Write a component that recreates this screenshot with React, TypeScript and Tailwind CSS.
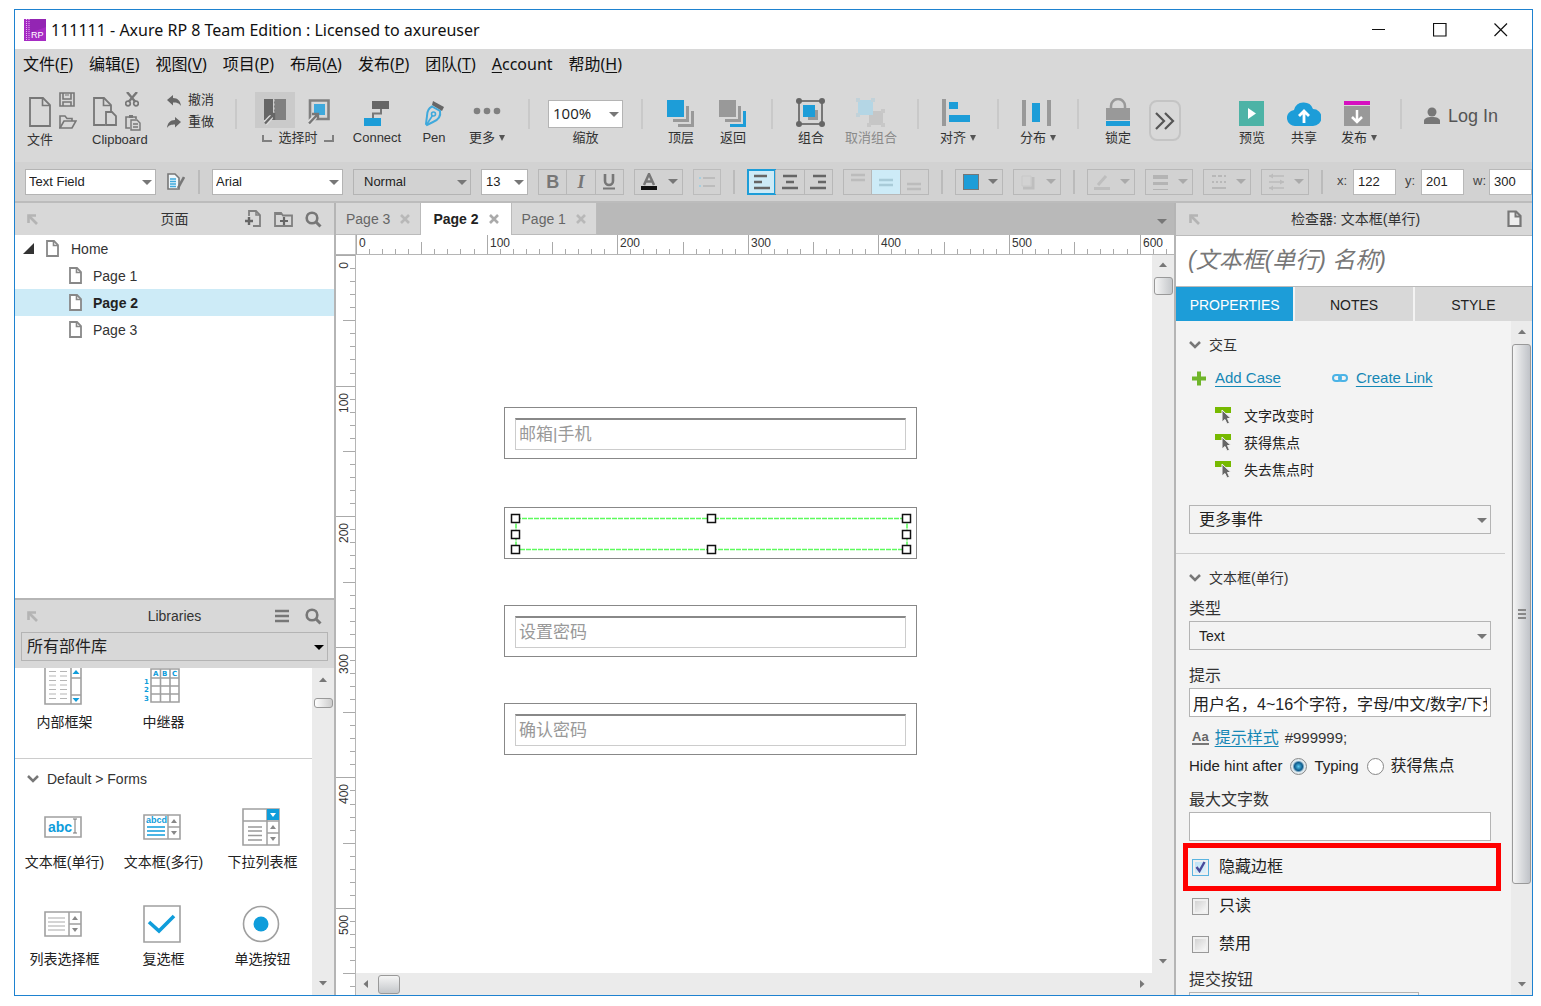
import { useState, type ReactNode } from 'react';
import { clsx } from 'clsx';

const MENUS: [string, string, string][] = [
  ['文件(', 'F', ')'], ['编辑(', 'E', ')'], ['视图(', 'V', ')'], ['项目(', 'P', ')'], ['布局(', 'A', ')'],
  ['发布(', 'P', ')'], ['团队(', 'T', ')'], ['', 'A', 'ccount'], ['帮助(', 'H', ')'],
];

const RULER_STEP = 13.06;

/* ---------- shared bits ---------- */

function Svg({ w, h, className, children }: { w: number; h: number; className?: string; children: ReactNode }) {
  return (
    <svg width={w} height={h} viewBox={`0 0 ${w} ${h}`} fill="none" aria-hidden="true" className={clsx('block shrink-0', className)}>
      {children}
    </svg>
  );
}

function Caret({ className }: { className?: string }) {
  return (
    <Svg w={10} h={5} className={className}>
      <path d="M0 0H10L5 5Z" fill="currentColor" />
    </Svg>
  );
}

function SelectBox({ label, value, className, caret = 'text-[#777]' }: { label: string; value: string; className?: string; caret?: string }) {
  return (
    <div className="relative flex shrink-0">
      <select aria-label={label} defaultValue={value} className={clsx('appearance-none border border-[#b4b4b4] pr-5 text-[#222] outline-none', className)}>
        <option>{value}</option>
      </select>
      <Caret className={clsx('pointer-events-none absolute top-1/2 right-1 -mt-0.5', caret)} />
    </div>
  );
}

function ToolSeparator() {
  return <div className="mx-[18px] h-[30px] w-0.5 shrink-0 self-center bg-[#c9c9c9]" />;
}

function FormatSeparator() {
  return <div className="mx-0.5 h-6 w-0.5 shrink-0 bg-[#bbb]" />;
}

function Tool({ label, menu, disabled, className, children }: { label: string; menu?: boolean; disabled?: boolean; className: string; children: ReactNode }) {
  return (
    <button disabled={disabled} className={clsx('flex shrink-0 flex-col items-center', className)}>
      <span className="flex h-[30px] items-end justify-center">{children}</span>
      <span className={clsx('flex items-center gap-1 leading-5 whitespace-nowrap', disabled ? 'text-[#8a8a8a]' : 'text-[#333]')}>
        {label}
        {menu && <Svg w={6} h={6}><path d="M0 0H6L3 6Z" fill="#555" /></Svg>}
      </span>
    </button>
  );
}

function DockIcon() {
  return (
    <Svg w={11} h={11}>
      <path d="M1.5 9V1.5H9" stroke="#b4b4b4" strokeWidth="2.6" />
      <path d="M1.5 1.5L10 10" stroke="#b4b4b4" strokeWidth="2.6" />
    </Svg>
  );
}

function SearchIcon() {
  return (
    <Svg w={17} h={17}>
      <circle cx="7" cy="7" r="5.3" stroke="#777" strokeWidth="2.6" />
      <path d="M11 11L15.5 15.5" stroke="#777" strokeWidth="3" />
    </Svg>
  );
}

function PageIcon({ className }: { className?: string }) {
  return (
    <Svg w={13} h={17} className={className}>
      <path d="M1 1H8L12 5V16H1Z" fill="#fff" stroke="#888" strokeWidth="1.8" />
      <path d="M7.5 1V5.5H12" stroke="#888" strokeWidth="1.6" />
    </Svg>
  );
}

function Chevron() {
  return <Svg w={12} h={8}><path d="M1 1L6 6L11 1" stroke="#777" strokeWidth="2.5" /></Svg>;
}

function ScrollArrow({ dir }: { dir: 'up' | 'down' | 'left' | 'right' }) {
  return (
    <Svg w={8} h={8} className={clsx(dir === 'down' && 'rotate-180', dir === 'left' && '-rotate-90', dir === 'right' && 'rotate-90')}>
      <path d="M0 6L4 1.5L8 6Z" fill="#777" />
    </Svg>
  );
}

/* ---------- title, menu and toolbars ---------- */

function TitleBar() {
  return (
    <header className="flex h-[39px] shrink-0 items-center bg-white pr-px pl-[9px] font-['Noto_Sans','Noto_Sans_CJK_SC',sans-serif]">
      <Svg w={22} h={22}>
        <path d="M0 0H22V22H0Z" fill="#a62bc4" />
        <path d="M6 0H22V8L6 14Z" fill="#9325b3" />
        <path d="M2.5 0V22M5 0V22" stroke="#e6b6f0" strokeDasharray="1 1" />
        <text x="7" y="19" fontSize="9" fill="#fff" fontFamily="Liberation Sans, sans-serif">RP</text>
      </Svg>
      <h1 className="ml-[5px] truncate text-base text-[#111]">111111 - Axure RP 8 Team Edition : Licensed to axureuser</h1>
      <div className="ml-auto flex self-stretch">
        <button aria-label="最小化" className="flex w-[61px] items-center justify-center"><Svg w={14} h={14}><path d="M0 6.5H13" stroke="#111" /></Svg></button>
        <button aria-label="最大化" className="flex w-[61px] items-center justify-center"><Svg w={14} h={14}><path d="M.5 .5H13V13H.5Z" stroke="#111" strokeWidth="1.2" /></Svg></button>
        <button aria-label="关闭" className="flex w-[61px] items-center justify-center"><Svg w={14} h={14}><path d="M.5 .5L13 13M13 .5L.5 13" stroke="#111" strokeWidth="1.2" /></Svg></button>
      </div>
    </header>
  );
}

function MenuBar() {
  return (
    <nav className="flex h-[30px] shrink-0 items-center gap-4 pl-2 font-['Noto_Sans','Noto_Sans_CJK_SC',sans-serif] text-base text-[#111]">
      {MENUS.map(([before, key, after]) => (
        <button key={before + key} className="whitespace-nowrap">{before}<span className="underline underline-offset-2">{key}</span>{after}</button>
      ))}
    </nav>
  );
}

function StackIcon({ front, back }: { front: string; back: string }) {
  return (
    <Svg w={28} h={28}>
      <path d="M0 0H17V17H0Z" fill={front} />
      <path d="M19 6H22V22H6V19H19Z" fill="#999" />
      <path d="M24 11H27V27H11V24H24Z" fill={back} />
    </Svg>
  );
}

function Toolbar() {
  return (
    <div className="flex h-[83px] shrink-0 items-end overflow-hidden pb-3.5 pl-3 text-[13px] text-[#333]">
      <button className="flex w-[52px] shrink-0 flex-col items-start">
        <span className="flex h-10 items-start gap-2 pl-0.5">
          <Svg w={22} h={30} className="mt-[5px]">
            <path d="M1 1H14L21 8V29H1Z" stroke="#777" strokeWidth="1.8" />
            <path d="M13.5 1V8.5H21" stroke="#777" strokeWidth="1.6" />
          </Svg>
          <span className="flex flex-col gap-2">
            <Svg w={17} h={15}>
              <path d="M1 1H15V14H1Z M4 1V7H12V1 M4 14V10H12V14" stroke="#777" strokeWidth="1.6" />
              <path d="M6 3H10" stroke="#777" />
            </Svg>
            <Svg w={18} h={14}>
              <path d="M1 13V1H6L8 3.5H13V6" stroke="#777" strokeWidth="1.6" />
              <path d="M1 13L5 6H17L13 13Z" stroke="#777" strokeWidth="1.6" />
            </Svg>
          </span>
        </span>
        <span className="leading-4">文件</span>
      </button>
      <button className="ml-[13px] flex w-[58px] shrink-0 flex-col items-start">
        <span className="flex h-10 items-start gap-2 pl-px">
          <Svg w={24} h={30} className="mt-[5px]">
            <path d="M12 28H1V1H11L18 8V14" stroke="#777" strokeWidth="1.8" />
            <path d="M10.5 1V8.5H18" stroke="#777" strokeWidth="1.6" />
            <path d="M13 15H19L23 19V28H13Z" stroke="#777" strokeWidth="1.8" />
          </Svg>
          <span className="flex flex-col gap-2">
            <Svg w={14} h={15}>
              <path d="M2 0L10.5 10M12 0L3.5 10" stroke="#777" strokeWidth="2.4" />
              <circle cx="3" cy="11.5" r="2.3" stroke="#777" strokeWidth="1.7" />
              <circle cx="11" cy="11.5" r="2.3" stroke="#777" strokeWidth="1.7" />
            </Svg>
            <Svg w={16} h={16}>
              <path d="M5 13H1V2H11V4" stroke="#777" strokeWidth="1.6" />
              <path d="M4 0H8V3H4Z" fill="#777" />
              <path d="M6 5H12L15 8V15H6Z M8 9H13M8 12H13" stroke="#777" strokeWidth="1.4" />
            </Svg>
          </span>
        </span>
        <span className="leading-4">Clipboard</span>
      </button>
      <div className="ml-[17px] flex w-[50px] shrink-0 flex-col gap-0.5 pb-4">
        <button className="flex items-center gap-[7px] leading-5">
          <Svg w={14} h={11}><path d="M6 0V3C11 3 13.5 6 14 11C12 8 10 7.5 6 7.5V10.5L0 5Z" fill="#666" /></Svg>撤消
        </button>
        <button className="flex items-center gap-[7px] leading-5">
          <Svg w={14} h={11}><path d="M8 0V3C3 3 .5 6 0 11C2 8 4 7.5 8 7.5V10.5L14 5Z" fill="#666" /></Svg>重做
        </button>
      </div>
      <ToolSeparator />
      <div className="flex w-[79px] shrink-0 flex-col">
        <div className="flex">
          <button aria-label="相交选择" className="flex h-9 w-10 items-center justify-center bg-[#cacaca]">
            <Svg w={22} h={26} className="mt-1">
              <path d="M0 0H9V21H0Z" fill="#666" />
              <path d="M10 0H22V21H10Z" fill="#808080" />
              <path d="M10 .5V21" stroke="#d8d8d8" strokeDasharray="2 2" />
              <path d="M1 24.5L9 16" stroke="#ddd" strokeWidth="5" />
              <path d="M1 24.5L9 16M4 15H10V21" stroke="#666" strokeWidth="2.4" />
            </Svg>
          </button>
          <button aria-label="包含选择" className="flex h-9 w-[39px] items-center justify-center pl-2">
            <Svg w={22} h={26} className="mt-1">
              <path d="M2 1.5H20.5V20H2Z" stroke="#808080" strokeWidth="2.6" />
              <path d="M6 5H17V16H6Z" fill="#3fa9dc" />
              <path d="M0 25L9 16" stroke="#ddd" strokeWidth="5" />
              <path d="M1 24.5L9 16M4 15H10V21" stroke="#777" strokeWidth="2.4" />
            </Svg>
          </button>
        </div>
        <span className="flex items-center justify-between pl-[7px] leading-5">
          <span className="h-[7px] w-2.5 border-b-2 border-l-2 border-[#808080]" />
          选择时
          <span className="h-[7px] w-2.5 border-r-2 border-b-2 border-[#808080]" />
        </span>
      </div>
      <div className="ml-4 flex shrink-0 gap-2.5">
        <Tool label="Connect" className="w-[54px]">
          <Svg w={28} h={28}>
            <path d="M9 1H26V9H9Z" fill="#666" />
            <path d="M1 18H18V26H1Z" fill="#1d9dd8" />
            <path d="M18 9V13.5H10V18" stroke="#777" strokeWidth="2" />
          </Svg>
        </Tool>
        <Tool label="Pen" className="w-10">
          <Svg w={20} h={28}>
            <path d="M9 1L20 7L18 11L8 5Z" fill="#666" />
            <path d="M8 6.5L16 11C17 16 14 20 9 22L3 25L2 24L3 16C3 11 5 8 8 6.5Z" stroke="#3fa9dc" strokeWidth="2" />
            <path d="M3 24L8.5 15.5" stroke="#3fa9dc" strokeWidth="1.6" />
            <circle cx="9.5" cy="14" r="2" stroke="#3fa9dc" strokeWidth="1.6" />
          </Svg>
        </Tool>
        <Tool label="更多" menu className="w-[46px]">
          <Svg w={28} h={28}>
            <circle cx="4" cy="11" r="3.3" fill="#808080" />
            <circle cx="14" cy="11" r="3.3" fill="#808080" />
            <circle cx="24" cy="11" r="3.3" fill="#808080" />
          </Svg>
        </Tool>
      </div>
      <ToolSeparator />
      <div className="flex shrink-0 flex-col items-center">
        <SelectBox label="缩放" value="100%" className="h-7 w-[75px] bg-white pl-1 font-['Open_Sans',sans-serif] text-[15px]" />
        <span className="leading-5">缩放</span>
      </div>
      <ToolSeparator />
      <div className="flex shrink-0 gap-3">
        <Tool label="顶层" className="w-10"><StackIcon front="#1d9dd8" back="#999" /></Tool>
        <Tool label="返回" className="w-10"><StackIcon front="#999" back="#1d9dd8" /></Tool>
      </div>
      <ToolSeparator />
      <div className="flex shrink-0 gap-3">
        <Tool label="组合" className="w-10">
          <Svg w={30} h={30}>
            <path d="M3 3H26V26H3Z" stroke="#777" strokeWidth="2" />
            <path d="M12 12H22V22H12Z" fill="#999" />
            <path d="M7 7H19V19H7Z" fill="#1d9dd8" />
            <g fill="#666">
              <circle cx="3" cy="3" r="3" /><circle cx="26" cy="3" r="3" />
              <circle cx="3" cy="26" r="3" /><circle cx="26" cy="26" r="3" />
            </g>
          </Svg>
        </Tool>
        <Tool label="取消组合" disabled className="w-14">
          <Svg w={30} h={30}>
            <path d="M13 13H27V27H13Z" fill="#c6c6c6" />
            <path d="M11 11H15V15H11ZM25 11H29V15H25ZM11 25H15V29H11ZM25 25H29V29H25Z" fill="#c8c8c8" />
            <path d="M2 2H17V17H2Z" fill="#b4d6e5" />
            <path d="M0 0H4V4H0ZM15 0H19V4H15ZM0 15H4V19H0Z" fill="#c2d2d9" />
          </Svg>
        </Tool>
      </div>
      <ToolSeparator />
      <Tool label="对齐" menu className="w-[42px]">
        <Svg w={34} h={30}>
          <path d="M1 1H5V28H1Z" fill="#999" />
          <path d="M8 4H17V11H8ZM8 17H29V24H8Z" fill="#1d9dd8" />
        </Svg>
      </Tool>
      <ToolSeparator />
      <Tool label="分布" menu className="w-[42px]">
        <Svg w={32} h={30}>
          <path d="M0 2H4V28H0ZM25 2H29V28H25Z" fill="#999" />
          <path d="M10 5H18V24H10Z" fill="#1d9dd8" />
        </Svg>
      </Tool>
      <ToolSeparator />
      <Tool label="锁定" className="w-[42px]">
        <Svg w={26} h={30}>
          <path d="M6 13V8A7 7 0 0 1 20 8V13" stroke="#999" strokeWidth="2.5" />
          <path d="M1 10H25V22H1Z" fill="#999" />
          <path d="M1 23H25V28H1Z" fill="#1d9dd8" />
        </Svg>
      </Tool>
      <button aria-label="更多工具" className="mb-[7px] ml-2.5 flex h-[41px] w-8 shrink-0 items-center justify-center rounded-lg border-2 border-[#c4c4c4]">
        <Svg w={20} h={18}><path d="M1 1L9 9L1 17M10 1L18 9L10 17" stroke="#555" strokeWidth="2.2" /></Svg>
      </button>
      <div className="ml-auto flex shrink-0 items-end gap-3">
        <Tool label="预览" className="w-10">
          <Svg w={26} h={28}><path d="M0 1H25V26H0Z" fill="#4db3a6" /><path d="M9 8L17 13.5L9 19Z" fill="#fff" /></Svg>
        </Tool>
        <Tool label="共享" className="w-10">
          <Svg w={34} h={28}>
            <path d="M9 26A8 8 0 0 1 7 10A10 10 0 0 1 26 9A8.5 8.5 0 0 1 26 26Z" fill="#1d9dd8" />
            <path d="M17 23V12M12 16L17 11L22 16" stroke="#fff" strokeWidth="2.8" />
          </Svg>
        </Tool>
        <Tool label="发布" menu className="w-[46px]">
          <Svg w={30} h={28}>
            <path d="M0 1H26V5H0Z" fill="#d60fc0" />
            <path d="M0 6H26V26H0Z" fill="#999" />
            <path d="M13 10V21M8 17L13 22L18 17" stroke="#fff" strokeWidth="2.5" />
          </Svg>
        </Tool>
      </div>
      <ToolSeparator />
      <button className="mr-[34px] mb-[18px] ml-1 flex shrink-0 items-center gap-2 text-lg text-[#555]">
        <Svg w={16} h={18}>
          <circle cx="8" cy="5" r="4.5" fill="#777" />
          <path d="M0 17V14C0 11.5 3 10 8 10S16 11.5 16 14V17Z" fill="#777" />
        </Svg>
        Log In
      </button>
    </div>
  );
}

function FormatDrop({ label, disabled, className = 'w-12', children }: { label: string; disabled?: boolean; className?: string; children: ReactNode }) {
  return (
    <button aria-label={label} disabled={disabled} className={clsx('flex h-[26px] shrink-0 items-center justify-between border border-[#b8b8b8] px-1', className)}>
      {children}
      <Caret className={disabled ? 'text-[#aaa]' : 'text-[#777]'} />
    </button>
  );
}

function LinesIcon({ lines, color }: { lines: string; color: string }) {
  return <Svg w={18} h={18}><path d={lines} stroke={color} strokeWidth="2.4" /></Svg>;
}

function Coord({ label, value }: { label: string; value: string }) {
  return (
    <label className="flex shrink-0 items-center text-[#444]">
      <span className="w-[18px] pl-0.5">{label}</span>
      <input defaultValue={value} className="h-[26px] w-[43px] border border-[#b8b8b8] bg-white px-1 text-[#222] outline-none" />
    </label>
  );
}

function FormatBar() {
  const segment = 'flex flex-1 items-center justify-center border-l border-[#b8b8b8] first:border-l-0';
  return (
    <div className="flex h-[41px] shrink-0 items-center gap-2.5 overflow-hidden border-b-2 border-[#bcbcbc] bg-[#d2d2d2] pl-2.5 text-[13px]">
      <SelectBox label="样式" value="Text Field" className="h-[26px] w-[131px] bg-white pt-px pl-[3px]" />
      <button aria-label="样式管理" className="flex w-5 shrink-0 justify-center">
        <Svg w={18} h={18}>
          <path d="M1 1H8L12 5V16H1Z" fill="#eef6fa" stroke="#777" strokeWidth="1.6" />
          <path d="M3 6H9M3 8.5H9M3 11H9M3 13.5H9" stroke="#3fa9dc" strokeWidth="1.4" />
          <path d="M17 4L11 15" stroke="#777" strokeWidth="2.6" />
        </Svg>
      </button>
      <FormatSeparator />
      <SelectBox label="字体" value="Arial" className="h-[26px] w-[131px] bg-white pt-px pl-[3px]" />
      <SelectBox label="字形" value="Normal" className="h-[26px] w-[118px] bg-transparent pt-px pl-2.5" />
      <SelectBox label="字号" value="13" className="h-[26px] w-[47px] bg-white pt-px pl-1" />
      <div className="flex h-[26px] w-[86px] shrink-0 border border-[#b8b8b8] text-lg leading-6 text-[#777]">
        <button className={clsx(segment, 'font-bold')}>B</button>
        <button className={clsx(segment, "font-['Liberation_Serif',serif] font-bold italic")}>I</button>
        <button aria-label="下划线" className={segment}>
          <Svg w={14} h={16}><path d="M3 0V7A4 4 0 0 0 11 7V0" stroke="#777" strokeWidth="2.6" /><path d="M1 14.5H13" stroke="#777" strokeWidth="2" /></Svg>
        </button>
      </div>
      <FormatDrop label="文字颜色" className="w-[49px]">
        <Svg w={20} h={18}>
          <path d="M5 12L10 1L15 12M7 8.5H13" stroke="#777" strokeWidth="2.5" />
          <path d="M2 13H18V17H2Z" fill="#111" />
        </Svg>
      </FormatDrop>
      <button aria-label="项目符号" disabled className="flex h-[26px] w-7 shrink-0 items-center justify-center border border-[#bcbcbc]">
        <Svg w={18} h={12}><path d="M5 2H17M5 10H17" stroke="#bcbcbc" strokeWidth="2" /><path d="M1 2H3M1 10H3" stroke="#a5cfe0" strokeWidth="2" /></Svg>
      </button>
      <FormatSeparator />
      <div className="flex h-[26px] w-[86px] shrink-0 border border-[#b8b8b8]">
        <button aria-label="左对齐" className="flex flex-1 items-center justify-center bg-[#cdebf7] outline-2 -outline-offset-1 outline-[#1d9dd8]"><LinesIcon lines="M1 3H14M1 9H9M1 15H17" color="#666" /></button>
        <button aria-label="居中" className={segment}><LinesIcon lines="M2 3H16M5 9H13M1 15H17" color="#666" /></button>
        <button aria-label="右对齐" className={segment}><LinesIcon lines="M4 3H17M9 9H17M1 15H17" color="#666" /></button>
      </div>
      <div className="flex h-[26px] w-[86px] shrink-0 border border-[#b8b8b8]">
        <button aria-label="顶部对齐" disabled className={segment}><LinesIcon lines="M2 2H16M2 7H16" color="#bcbcbc" /></button>
        <button aria-label="垂直居中" disabled className={clsx(segment, 'bg-[#cdebf7]')}><LinesIcon lines="M2 7H16M2 12H16" color="#a9cbd8" /></button>
        <button aria-label="底部对齐" disabled className={segment}><LinesIcon lines="M2 11H16M2 16H16" color="#bcbcbc" /></button>
      </div>
      <FormatSeparator />
      <FormatDrop label="填充颜色"><span className="ml-[3px] size-4 border border-[#777] bg-[#1d9dd8]" /></FormatDrop>
      <FormatDrop label="阴影" disabled>
        <Svg w={18} h={18}><path d="M15 4V15H5" stroke="#bebebe" strokeWidth="3" /><path d="M4 3H13V13H4Z" fill="#d2d2d2" stroke="#c8c8c8" /></Svg>
      </FormatDrop>
      <FormatSeparator />
      <FormatDrop label="线条颜色" disabled>
        <Svg w={20} h={18}><path d="M6 12L14 3" stroke="#bebebe" strokeWidth="3" /><path d="M2 15.5H18" stroke="#bebebe" strokeWidth="3" /></Svg>
      </FormatDrop>
      <FormatDrop label="线宽" disabled>
        <Svg w={20} h={18}><path d="M3 4H18" stroke="#b4b4b4" strokeWidth="4" /><path d="M3 10.5H18" stroke="#b4b4b4" strokeWidth="3" /><path d="M3 16.5H18" stroke="#b4b4b4" /></Svg>
      </FormatDrop>
      <FormatDrop label="线型" disabled>
        <Svg w={20} h={18}><path d="M4 3H18" stroke="#b8b8b8" strokeWidth="2" strokeDasharray="4 2" /><path d="M4 9H18" stroke="#b8b8b8" strokeWidth="2" strokeDasharray="2 2" /><path d="M4 15H18" stroke="#b8b8b8" strokeWidth="2" /></Svg>
      </FormatDrop>
      <FormatDrop label="箭头" disabled>
        <Svg w={20} h={18}><path d="M3 3H18M3 9H18M3 15H18" stroke="#bcbcbc" strokeWidth="1.4" /><path d="M3 3L7 .5V5.5ZM18 9L14 6.5V11.5ZM3 15L7 12.5V17.5Z" fill="#bcbcbc" /></Svg>
      </FormatDrop>
      <FormatSeparator />
      <div className="flex shrink-0 gap-[7px]">
        <Coord label="x:" value="122" />
        <Coord label="y:" value="201" />
        <Coord label="w:" value="300" />
      </div>
    </div>
  );
}

/* ---------- left side ---------- */

function PagesPanel() {
  const [selected, setSelected] = useState('Page 2');
  return (
    <section className="flex min-h-0 flex-1 flex-col bg-white">
      <div className="flex h-8 shrink-0 items-center bg-[#d8d8d8] px-3">
        <div className="flex flex-1"><DockIcon /></div>
        <h2 className="text-[#333]">页面</h2>
        <div className="flex flex-1 items-center justify-end gap-3">
          <button aria-label="添加页面">
            <Svg w={17} h={18}>
              <path d="M4 6V1H11L15 5V16H8" stroke="#808080" strokeWidth="1.8" />
              <path d="M11 1V5H15" stroke="#808080" strokeWidth="1.5" />
              <path d="M0 11H8M4 7V15" stroke="#666" strokeWidth="2.4" />
            </Svg>
          </button>
          <button aria-label="添加文件夹">
            <Svg w={19} h={17}>
              <path d="M1 15V2H7L9 4.5H18V15Z" stroke="#808080" strokeWidth="1.8" />
              <path d="M1 1H7L9 4H1Z" fill="#808080" />
              <path d="M6 10H14M10 6V14" stroke="#666" strokeWidth="2.2" />
            </Svg>
          </button>
          <button aria-label="搜索页面"><SearchIcon /></button>
        </div>
      </div>
      <ul className="overflow-hidden">
        <li>
          <div className="flex h-[27px] items-center pl-2 text-[#333]">
            <Svg w={11} h={11}><path d="M11 0V11H0Z" fill="#333" /></Svg>
            <PageIcon className="ml-3" />
            <span className="ml-3">Home</span>
          </div>
          <ul>
            {['Page 1', 'Page 2', 'Page 3'].map(page => (
              <li key={page}>
                <button onClick={() => setSelected(page)} className={clsx('flex h-[27px] w-full items-center gap-[11px] pl-[54px]', selected === page ? 'bg-[#cdebf7] font-bold text-[#222]' : 'text-[#333]')}>
                  <PageIcon />
                  {page}
                </button>
              </li>
            ))}
          </ul>
        </li>
      </ul>
    </section>
  );
}

const GREY = '#a0a0a0';
const CYAN = '#0f9ddb';

function Spinner({ x, y, h }: { x: number; y: number; h: number }) {
  return (
    <>
      <path d={`M${x} ${y}V${y + h}M${x} ${y + h / 2}H37`} stroke={GREY} strokeWidth="1.5" />
      <path d={`M${x + 3} ${y + h / 4 + 2}H${x + 9}L${x + 6} ${y + h / 4 - 2}ZM${x + 3} ${y + (h * 3) / 4 - 2}H${x + 9}L${x + 6} ${y + (h * 3) / 4 + 2}Z`} fill="#888" />
    </>
  );
}

const GENERAL_WIDGETS = [
  {
    name: '内部框架',
    icon: (
      <Svg w={38} h={37}>
        <path d="M1 0V36H37V0M27 0V36M27 10H37M27 27H37" stroke={GREY} strokeWidth="1.6" />
        <path d="M5 3.5H12M5 8H12M5 12.5H12M5 17H12M5 21.5H12M5 26H12M5 30.5H12M16 3.5H23M16 8H23M16 12.5H23M16 17H23M16 21.5H23M16 26H23M16 30.5H23" stroke="#b5b5b5" />
        <path d="M28.5 6H35.5L32 2ZM28.5 30H35.5L32 34Z" fill={CYAN} />
      </Svg>
    ),
  },
  {
    name: '中继器',
    icon: (
      <Svg w={36} h={36}>
        <path d="M7 1H35V34H7ZM7 10H35M7 18H35M7 26H35M16.5 1V34M26 1V34" stroke={GREY} strokeWidth="1.6" />
        <g fill={CYAN} fontSize="7" fontWeight="bold" fontFamily="DejaVu Sans, sans-serif">
          <text x="9" y="8">A</text><text x="18" y="8">B</text><text x="28" y="8">C</text>
          <text x="0" y="16">1</text><text x="0" y="24">2</text><text x="0" y="33">3</text>
        </g>
      </Svg>
    ),
  },
];

const FORM_WIDGETS = [
  {
    name: '文本框(单行)',
    icon: (
      <Svg w={38} h={22}>
        <path d="M1 1H37V21H1Z" stroke={GREY} strokeWidth="1.6" />
        <text x="4" y="16" fontSize="14" fontWeight="bold" fill={CYAN} fontFamily="Liberation Sans, sans-serif">abc</text>
        <path d="M29 3H33M29 17H33M31 3V17" stroke="#777" />
      </Svg>
    ),
  },
  {
    name: '文本框(多行)',
    icon: (
      <Svg w={38} h={26}>
        <path d="M1 1H37V25H1Z" stroke={GREY} strokeWidth="1.6" />
        <text x="3" y="9" fontSize="9" fontWeight="bold" fill={CYAN} fontFamily="Liberation Sans, sans-serif">abcd</text>
        <path d="M4 13H22M4 17H22M4 21H22" stroke={CYAN} strokeWidth="1.5" />
        <Spinner x={25} y={1} h={24} />
      </Svg>
    ),
  },
  {
    name: '下拉列表框',
    icon: (
      <Svg w={38} h={38}>
        <path d="M1 1H37V37H1ZM1 13H37M25 1V13" stroke={GREY} strokeWidth="1.6" />
        <path d="M25 1H37V12H25Z" fill={CYAN} />
        <path d="M28 5H34L31 9Z" fill="#fff" />
        <path d="M6 19H20M6 23H20M6 27.5H20M6 32H20" stroke="#999" strokeWidth="1.4" />
        <Spinner x={25} y={13} h={24} />
      </Svg>
    ),
  },
  {
    name: '列表选择框',
    icon: (
      <Svg w={38} h={26}>
        <path d="M1 1H37V25H1Z" stroke={GREY} strokeWidth="1.6" />
        <path d="M4 7H21M4 11H21M4 15H21M4 19H21" stroke="#aaa" strokeWidth="1.2" />
        <Spinner x={25} y={1} h={24} />
      </Svg>
    ),
  },
  {
    name: '复选框',
    icon: (
      <Svg w={38} h={38}>
        <path d="M1 1H37V37H1Z" stroke={GREY} strokeWidth="1.6" />
        <path d="M6 17L16 26L31 11" stroke={CYAN} strokeWidth="3.6" />
      </Svg>
    ),
  },
  {
    name: '单选按钮',
    icon: (
      <Svg w={38} h={38}>
        <circle cx="19" cy="19" r="17.5" stroke={GREY} strokeWidth="1.6" />
        <circle cx="19" cy="19" r="7.5" fill={CYAN} />
      </Svg>
    ),
  },
];

function LibrariesPanel() {
  return (
    <section className="flex min-h-0 flex-1 flex-col border-t-2 border-[#b5b5b5] bg-[#d8d8d8]">
      <div className="flex h-8 shrink-0 items-center px-3">
        <div className="flex flex-1"><DockIcon /></div>
        <h2 className="text-[#333]">Libraries</h2>
        <div className="flex flex-1 items-center justify-end gap-4">
          <button aria-label="库菜单"><Svg w={14} h={14}><path d="M0 2H14M0 7H14M0 12H14" stroke="#777" strokeWidth="2.6" /></Svg></button>
          <button aria-label="搜索部件"><SearchIcon /></button>
        </div>
      </div>
      <div className="flex shrink-0 flex-col px-1.5 pb-[7px]">
        <SelectBox label="部件库" value="所有部件库" className="h-[29px] w-full bg-transparent pl-[5px] text-base" caret="text-black" />
      </div>
      <div className="flex min-h-0 flex-1 bg-white">
        <div className="min-w-0 flex-1 overflow-hidden">
          <ul className="grid grid-cols-3 border-b border-[#ccc] pb-6">
            {GENERAL_WIDGETS.map(w => (
              <li key={w.name} className="flex flex-col items-center">
                <span className="flex h-[42px] items-start pr-1">{w.icon}</span>
                <span className="leading-6">{w.name}</span>
              </li>
            ))}
          </ul>
          <h3 className="flex h-10 items-center gap-2 pl-3 text-[#333]"><Chevron />Default &gt; Forms</h3>
          <ul className="mt-[5px] grid grid-cols-3 gap-y-[27px]">
            {FORM_WIDGETS.map(w => (
              <li key={w.name} className="flex flex-col items-center">
                <span className="flex h-[46px] items-center pr-1">{w.icon}</span>
                <span className="leading-6 whitespace-nowrap">{w.name}</span>
              </li>
            ))}
          </ul>
        </div>
        <div className="flex w-[22px] flex-col items-center bg-[#ebebeb] py-2">
          <ScrollArrow dir="up" />
          <div className="mt-3.5 h-2.5 w-[19px] rounded-[3px] border border-[#999] bg-linear-to-r from-white to-[#ccc]" />
          <div className="mt-auto"><ScrollArrow dir="down" /></div>
        </div>
      </div>
    </section>
  );
}

/* ---------- canvas ---------- */

function RulerTicks({ vertical }: { vertical?: boolean }) {
  return (
    <svg aria-hidden="true" className="block size-full" fontSize="12" fill="#333">
      {Array.from({ length: vertical ? 57 : 63 }, (_, i) => {
        const at = Math.round(i * RULER_STEP) + 0.5;
        const size = i % 10 === 0 ? 19 : i % 5 === 0 ? 12 : 5;
        return vertical
          ? <line key={i} x1={19 - size} x2="19" y1={at} y2={at} stroke="#aaa" />
          : <line key={i} y1={19 - size} y2="19" x1={at} x2={at} stroke="#aaa" />;
      })}
      {Array.from({ length: vertical ? 6 : 7 }, (_, i) => {
        const at = Math.round(i * RULER_STEP * 10);
        return vertical
          ? <text key={i} textAnchor="end" transform={`translate(12 ${at + 7}) rotate(-90)`}>{i * 100}</text>
          : <text key={i} x={at + 3} y="12">{i * 100}</text>;
      })}
    </svg>
  );
}

const FIELDS = [
  { top: 152, hint: '邮箱|手机' },
  { top: 252, hint: '', selected: true },
  { top: 350, hint: '设置密码' },
  { top: 448, hint: '确认密码' },
];

const HANDLES: [number, number][] = [[0, 0], [196, 0], [391, 0], [0, 16], [391, 16], [0, 31], [196, 31], [391, 31]];

function SelectionFrame() {
  return (
    <svg width="402" height="44" viewBox="0 0 402 44" className="absolute top-[5px] left-[5px]" aria-hidden="true">
      <rect x="6" y="5.5" width="391" height="31" fill="none" stroke="#5cfb5c" strokeWidth="1.6" strokeDasharray="5 1" />
      {HANDLES.map(([x, y]) => <rect key={`${x}-${y}`} x={x + 1.5} y={y + 1.5} width="8" height="8" fill="#fff" stroke="#111" strokeWidth="1.5" />)}
    </svg>
  );
}

function Workspace() {
  const [tab, setTab] = useState('Page 2');
  return (
    <main className="flex min-w-0 flex-1 flex-col bg-white">
      <div className="flex h-8 shrink-0 items-stretch bg-[#b9b9b9]">
        {['Page 3', 'Page 2', 'Page 1'].map(name => (
          <div key={name} className={clsx('flex items-center gap-2.5 border-r border-[#bbb]', tab === name ? 'bg-white px-3' : 'border-b bg-[#d8d8d8] px-2.5')}>
            <button onClick={() => setTab(name)} className={tab === name ? 'font-bold text-[#222]' : 'text-[#666]'}>{name}</button>
            <button aria-label={`关闭 ${name}`}>
              <Svg w={10} h={10}><path d="M1 1L9 9M9 1L1 9" stroke={tab === name ? '#aaa' : '#b8b8b8'} strokeWidth="2.6" /></Svg>
            </button>
          </div>
        ))}
        <button aria-label="所有标签页" className="mt-1 mr-[7px] ml-auto"><Caret className="text-[#777]" /></button>
      </div>
      <div className="flex h-5 shrink-0 border-b border-[#b5b5b5]">
        <div className="w-5 shrink-0 border-r border-[#ccc]" />
        <div className="min-w-0 flex-1"><RulerTicks /></div>
      </div>
      <div className="flex min-h-0 flex-1">
        <div className="w-5 shrink-0 overflow-hidden border-r border-[#b5b5b5]"><RulerTicks vertical /></div>
        <div className="flex min-w-0 flex-1 flex-col">
          <div className="relative min-h-0 flex-1 overflow-hidden">
            {FIELDS.map(f => (
              <div key={f.top} className="absolute left-[148px] h-[52px] w-[413px] border border-[#888] p-2.5" style={{ top: f.top }}>
                {f.selected ? <SelectionFrame /> : (
                  <input aria-label={f.hint} placeholder={f.hint} className="block h-8 w-full border border-t-2 border-[#ccc] border-t-[#888] px-[3px] text-[17px] outline-none placeholder:text-[#999]" />
                )}
              </div>
            ))}
          </div>
          <div className="flex h-[22px] shrink-0 items-center bg-[#ebebeb] px-1.5">
            <ScrollArrow dir="left" />
            <div className="ml-2 h-[19px] w-[22px] rounded-[3px] border border-[#999] bg-linear-to-b from-[#f5f5f5] to-[#c4c7ca]" />
            <div className="ml-auto"><ScrollArrow dir="right" /></div>
          </div>
        </div>
        <div className="flex w-[22px] shrink-0 flex-col items-center bg-[#ebebeb] pt-1.5 pb-[30px]">
          <ScrollArrow dir="up" />
          <div className="mt-2 h-[18px] w-[19px] rounded-[3px] border border-[#999] bg-linear-to-r from-[#f5f5f5] to-[#c4c7ca]" />
          <div className="mt-auto"><ScrollArrow dir="down" /></div>
        </div>
      </div>
    </main>
  );
}

/* ---------- inspector ---------- */

function CheckRow({ label, on, className }: { label: string; on?: boolean; className?: string }) {
  return (
    <label className={clsx('flex items-center gap-2.5 text-base text-[#222]', className)}>
      <span className="grid place-items-center">
        <input type="checkbox" defaultChecked={on} className="peer col-start-1 row-start-1 size-[17px] appearance-none border border-[#999] bg-linear-to-br from-[#ccc] to-white shadow-[inset_0_0_0_2px_#f0f0f0] checked:border-[#5ab4e0] checked:from-[#b8dff5] checked:to-[#e6f5fc]" />
        <Svg w={11} h={12} className="pointer-events-none invisible col-start-1 row-start-1 peer-checked:visible">
          <path d="M1.5 6L4.5 10L9.5 1" stroke="#4a4a9a" strokeWidth="2.4" />
        </Svg>
      </span>
      {label}
    </label>
  );
}

function Inspector() {
  const [tab, setTab] = useState('PROPERTIES');
  const radio = 'size-[17px] appearance-none rounded-full border border-[#888] bg-white checked:bg-[radial-gradient(circle,#5cc8ee_0px,#0b5a8c_4px,#dfe9ee_6px)]';
  const field = 'h-[29px] w-full border border-[#b4b4b4] bg-white px-[3px] text-base text-[#222] outline-none';
  return (
    <aside className="flex w-[358px] shrink-0 flex-col border-l-2 border-[#b5b5b5] bg-[#f3f3f3]">
      <div className="flex h-[33px] shrink-0 items-center border-b border-[#bbb] bg-[#d8d8d8] pr-2.5 pl-[13px]">
        <div className="flex flex-1"><DockIcon /></div>
        <h2 className="text-[#333]">检查器: 文本框(单行)</h2>
        <div className="flex flex-1 justify-end">
          <button aria-label="页面检查器"><Svg w={15} h={18}><path d="M1.5 1.5H9L13.5 6V16H1.5Z" fill="#eee" stroke="#777" strokeWidth="2.2" /><path d="M8.5 1V6.5H14" stroke="#777" strokeWidth="2" /></Svg></button>
        </div>
      </div>
      <div className="shrink-0 border-b border-[#bbb] bg-white">
        <input aria-label="名称" placeholder="(文本框(单行) 名称)" className="block h-[50px] w-full px-3 pb-0.5 text-[23px] italic outline-none placeholder:text-[#777]" />
      </div>
      <div className="grid h-[34px] shrink-0 grid-cols-3 gap-0.5 bg-[#f3f3f3]">
        {['PROPERTIES', 'NOTES', 'STYLE'].map(name => (
          <button key={name} onClick={() => setTab(name)} className={clsx('pt-px', tab === name ? 'bg-[#1d9dd8] text-white' : 'bg-[#d8d8d8] text-[#222]')}>{name}</button>
        ))}
      </div>
      <div className="flex min-h-0 flex-1">
        <div className="min-w-0 flex-1 overflow-hidden pr-5 pl-[13px] text-base text-[#333]">
          <h3 className="mt-2.5 flex h-7 items-center gap-2 text-sm"><Chevron />交互</h3>
          <div className="mt-[7px] flex h-6 items-center text-[15px] text-[#1587b5]">
            <Svg w={16} h={16} className="mr-2 ml-0.5"><path d="M1 8.5H15M8 1.5V15.5" stroke="#6fb52a" strokeWidth="4" /></Svg>
            <a href="#case" className="leading-4 underline underline-offset-[3px]">Add Case</a>
            <Svg w={16} h={8} className="mr-2 ml-[51px]">
              <rect x="1" y="1" width="8" height="6" rx="3" stroke="#4bb3e6" strokeWidth="2" />
              <rect x="7" y="1" width="8" height="6" rx="3" stroke="#4bb3e6" strokeWidth="2" />
            </Svg>
            <a href="#link" className="leading-4 underline underline-offset-[3px]">Create Link</a>
          </div>
          <ul className="mt-3 text-sm text-[#222]">
            {['文字改变时', '获得焦点', '失去焦点时'].map(name => (
              <li key={name} className="flex h-[27px] items-center gap-3 pl-[26px]">
                <Svg w={17} h={17}>
                  <path d="M0 0H16V6H0Z" fill="#76b900" />
                  <path d="M7 3V15L10 12.5L12 17L14.5 16L12.5 11.5H16Z" fill="#666" stroke="#f3f3f3" />
                </Svg>
                {name}
              </li>
            ))}
          </ul>
          <div className="mt-[22px] flex flex-col">
            <SelectBox label="更多事件" value="更多事件" className="h-[29px] w-full bg-transparent pl-[9px] text-base" />
          </div>
          <hr className="mt-[19px] -mr-3.5 -ml-[13px] border-[#ccc]" />
          <h3 className="mt-2.5 flex h-7 items-center gap-2 text-sm"><Chevron />文本框(单行)</h3>
          <div className="mt-[5px] leading-6">类型</div>
          <div className="flex flex-col">
            <SelectBox label="类型" value="Text" className="h-[29px] w-full bg-transparent pl-[9px] text-sm" />
          </div>
          <label className="mt-3.5 block leading-6">提示
            <input defaultValue="用户名，4~16个字符，字母/中文/数字/下划线" className={field} />
          </label>
          <div className="mt-[7px] flex h-7 items-center text-[15px]">
            <span className="mr-1.5 ml-[3px] border-b-2 border-[#777] text-[13px] leading-3 font-bold text-[#666]">Aa</span>
            <a href="#hint-style" className="mr-1.5 text-base leading-5 text-[#1587b5] underline underline-offset-[3px]">提示样式</a>
            #999999;
          </div>
          <div className="flex h-7 items-center gap-2 text-[15px] text-[#222]">
            Hide hint after
            <label className="flex items-center gap-[7px]"><input type="radio" name="hide-hint" defaultChecked className={radio} />Typing</label>
            <label className="flex items-center gap-[7px] text-base"><input type="radio" name="hide-hint" className={radio} />获得焦点</label>
          </div>
          <label className="mt-2 block leading-6">最大文字数
            <input className={field} />
          </label>
          <div className="mt-0.5 -mr-2.5 -ml-1.5 flex h-12 items-center border-[5px] border-[#f00] pl-1">
            <CheckRow label="隐藏边框" on />
          </div>
          <CheckRow label="只读" className="h-[30px] pl-[3px]" />
          <CheckRow label="禁用" className="mt-2 h-[30px] pl-[3px]" />
          <label className="mt-[9px] block leading-6">提交按钮
            <input className="block h-[29px] w-[230px] border border-[#b4b4b4] bg-[#f3f3f3] px-1" />
          </label>
        </div>
        <div className="flex w-[21px] shrink-0 flex-col items-center bg-[#ebebeb] py-[7px]">
          <ScrollArrow dir="up" />
          <div className="mt-2 flex min-h-0 flex-1 flex-col pb-2">
            <div className="flex h-[86%] w-[19px] flex-col items-center justify-center gap-0.5 rounded-[3px] border border-[#999] bg-linear-to-r from-[#f5f5f5] to-[#c0c3c8]">
              <span className="h-0.5 w-2 bg-[#888]" />
              <span className="h-0.5 w-2 bg-[#888]" />
              <span className="h-0.5 w-2 bg-[#888]" />
            </div>
          </div>
          <ScrollArrow dir="down" />
        </div>
      </div>
    </aside>
  );
}

export default function App() {
  return (
    <div className="h-screen bg-white pt-[9px] pr-2 pb-2.5 pl-3.5">
      <div className="flex h-full flex-col overflow-hidden border border-[#1e82d0] bg-[#d8d8d8] font-['Liberation_Sans','Noto_Sans_CJK_SC',sans-serif] text-sm text-[#222]">
        <TitleBar />
        <MenuBar />
        <Toolbar />
        <FormatBar />
        <div className="flex min-h-0 flex-1">
          <div className="flex w-[321px] shrink-0 flex-col border-r-2 border-[#b5b5b5]">
            <PagesPanel />
            <LibrariesPanel />
          </div>
          <Workspace />
          <Inspector />
        </div>
      </div>
    </div>
  );
}
